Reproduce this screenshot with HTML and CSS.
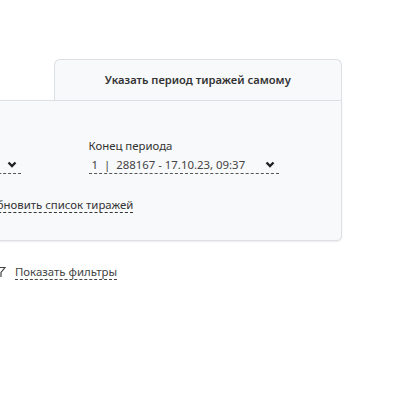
FILE: index.html
```html
<!DOCTYPE html>
<html lang="ru">
<head>
    <meta charset="UTF-8">
    <title>Тиражи</title>
    <link rel="stylesheet" href="styles.css">
</head>
<body>

    <div class="page">
        <!-- Draw period selector -->
        <div class="draws">
            <div class="tabs">
                <div class="tab">Из списка</div>
                <div class="tab active">Указать период тиражей самому</div>
            </div>
            <div class="panel">
                <div class="fields">
                    <div class="field">
                        <div class="label">Начало периода</div>
                        <div class="select">
                            <span>1 | 288160 - 17.10.23, 09:23</span>
                            <svg class="chevron" width="10" height="7" viewBox="0 0 10 7"><polyline points="1.5,1.5 5,5 8.5,1.5" fill="none" stroke="#222" stroke-width="2.4"/></svg>
                        </div>
                    </div>
                    <div class="field">
                        <div class="label">Конец периода</div>
                        <div class="select">
                            <span>1 &nbsp;|&nbsp; 288167 - 17.10.23, 09:37</span>
                            <svg class="chevron" width="10" height="7" viewBox="0 0 10 7"><polyline points="1.5,1.5 5,5 8.5,1.5" fill="none" stroke="#222" stroke-width="2.4"/></svg>
                        </div>
                    </div>
                </div>
                <a class="refresh" href="#">Обновить список тиражей</a>
            </div>
        </div>

        <!-- Filters toggle -->
        <div class="filters">
            <svg width="12" height="12" viewBox="0 0 12 12"><path d="M1 1.5h10L7 6.5v4.5" fill="none" stroke="#444" stroke-width="1.2"/></svg>
            <a href="#">Показать фильтры</a>
        </div>
    </div>

</body>
</html>
```

FILE: styles.css
```css
* {
    margin: 0;
    padding: 0;
    box-sizing: border-box;
}

body {
    font-family: "Noto Sans", "Open Sans", sans-serif;
    font-size: 11.4px;
    color: #333;
    background: #fff;
    overflow: hidden;
}

.page {
    padding-top: 59px;
    margin-left: -233px;
    width: 700px;
}

/* Tabs */
.draws {
    width: 575px;
}

.tabs {
    display: flex;
}

.tab {
    flex: 1;
    height: 41px;
    display: flex;
    align-items: center;
    justify-content: center;
    font-size: 11.2px;
    font-weight: 600;
    color: #333;
    padding-bottom: 1px;
}

.tab.active {
    background: #f8f9fb;
    border: 1px solid #dcdfe3;
    border-bottom: none;
    border-radius: 6px 6px 0 0;
    margin-bottom: -1px;
    position: relative;
    z-index: 1;
}

.panel {
    background: #f8f9fb;
    border: 1px solid #dcdfe3;
    border-radius: 0 0 5px 5px;
    box-shadow: 0 1px 2px rgba(0, 0, 0, 0.08);
    height: 141px;
    padding: 37px 62px 0 62px;
}

.fields {
    display: flex;
    gap: 68px;
}

.field {
    width: 191px;
}

.label {
    line-height: 16px;
    margin-bottom: 1px;
}

.select {
    display: flex;
    align-items: center;
    justify-content: space-between;
    border-bottom: 1px dashed #555;
    height: 19px;
    padding: 0 4px 0 3px;
    color: #444;
}

.chevron {
    display: block;
}

.refresh {
    display: inline-block;
    margin-top: 23px;
    margin-left: 158px;
    color: #333;
    text-decoration: none;
    border-bottom: 1px dashed #333;
    line-height: 15px;
}

/* Filters */
.filters {
    display: flex;
    align-items: center;
    gap: 9px;
    margin-top: 23px;
    margin-left: 227px;
}

.filters a {
    color: #444;
    text-decoration: none;
    border-bottom: 1px dashed #444;
    line-height: 15px;
}
```
